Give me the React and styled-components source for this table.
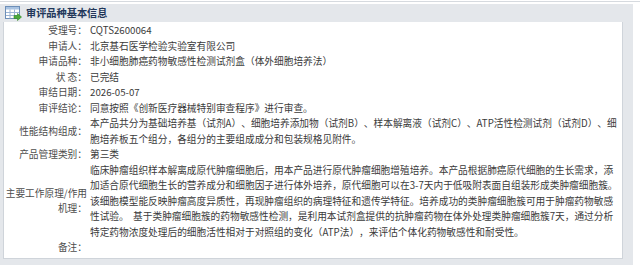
import React from 'react';
import styled, { createGlobalStyle } from 'styled-components';

const GlobalStyle = createGlobalStyle`
  html, body {
    margin: 0;
    padding: 0;
    background: #ffffff;
  }
  body {
    font-family: "Noto Sans CJK SC", "Noto Sans", sans-serif;
    font-size: 9.7px;
    color: #333;
    text-spacing-trim: space-all;
  }
`;

const rows = [
  { label: ['受理号：'], value: 'CQTS2600064' },
  { label: ['申请人：'], value: '北京基石医学检验实验室有限公司' },
  { label: ['申请品种：'], value: '非小细胞肺癌药物敏感性检测试剂盒（体外细胞培养法）' },
  { label: ['状 态：'], value: '已完结' },
  { label: ['审结日期：'], value: '2026-05-07' },
  { label: ['审评结论：'], value: '同意按照《创新医疗器械特别审查程序》进行审查。' },
  {
    label: ['性能结构组成：'],
    value:
      '本产品共分为基础培养基（试剂A）、细胞培养添加物（试剂B）、样本解离液（试剂C）、ATP活性检测试剂（试剂D）、细胞培养板五个组分，各组分的主要组成成分和包装规格见附件。',
  },
  { label: ['产品管理类别：'], value: '第三类' },
  {
    label: ['主要工作原理/作用', '机理：'],
    value:
      '临床肿瘤组织样本解离成原代肿瘤细胞后，用本产品进行原代肿瘤细胞增殖培养。本产品根据肺癌原代细胞的生长需求，添加适合原代细胞生长的营养成分和细胞因子进行体外培养，原代细胞可以在3-7天内于低吸附表面自组装形成类肿瘤细胞簇。该细胞模型能反映肿瘤高度异质性，再现肿瘤组织的病理特征和遗传学特征。培养成功的类肿瘤细胞簇可用于肿瘤药物敏感性试验。\u00a0 基于类肿瘤细胞簇的药物敏感性检测，是利用本试剂盒提供的抗肿瘤药物在体外处理类肿瘤细胞簇7天，通过分析特定药物浓度处理后的细胞活性相对于对照组的变化（ATP法），来评估个体化药物敏感性和耐受性。',
  },
  { label: ['备注：'], value: '' },
];

const Page = styled.div`
  width: 640px;
  height: 266px;
  padding-top: 1px;
  box-sizing: border-box;
  overflow: hidden;
`;

const TopRule = styled.div`
  height: 1px;
  background: #d6dadf;
  margin-bottom: 2px;
`;

const Panel = styled.section`
  width: 633px;
  box-sizing: border-box;
  background: #e4e7eb;
  padding: 0 10px 6px 3px;
`;

const Header = styled.div`
  height: 18px;
  display: flex;
  align-items: center;
  gap: 4px;
  padding-left: 2px;
`;

const Title = styled.h2`
  margin: 0;
  font-size: 10.2px;
  font-weight: bold;
  color: #22375a;
  line-height: 18px;
`;

const Content = styled.div`
  background: #ffffff;
  border: 1px solid #cfd4da;
  border-top: none;
  padding: 1px 0 2px 0;
  display: grid;
  grid-template-columns: 83px 1fr;
  column-gap: 3px;
  line-height: 15.5px;
`;

const Label = styled.div`
  display: flex;
  flex-direction: column;
  align-items: flex-end;
  justify-content: center;
  color: #4d4d4d;
  span {
    white-space: nowrap;
  }
`;

const Value = styled.div`
  color: #3a3a3a;
  min-height: 15.5px;
`;

const TableIcon = () => (
  <svg width="17" height="15" viewBox="0 0 17 15">
    <rect x="0.5" y="0.5" width="14" height="12" fill="#ffffff" stroke="#6d8fb8" />
    <rect x="1" y="1" width="13" height="2.5" fill="#a9c3e2" />
    <path d="M1 6.5H14M1 9.5H14M5 3.5V12.5M9.5 3.5V12.5" stroke="#9bb4d4" strokeWidth="1" />
    <path d="M9 9.5h3.5V7.5L16.5 11 12.5 14.5V12.5H9Z" fill="#4caa3c" stroke="#2f8a24" strokeWidth="0.6" />
  </svg>
);

export default function App() {
  return (
    <Page>
      <GlobalStyle />
      <TopRule />
      <Panel>
        <Header>
          <TableIcon />
          <Title>审评品种基本信息</Title>
        </Header>
        <Content>
          {rows.map((row, i) => (
            <React.Fragment key={i}>
              <Label>
                {row.label.map((l, j) => (
                  <span key={j}>{l}</span>
                ))}
              </Label>
              <Value>{row.value}</Value>
            </React.Fragment>
          ))}
        </Content>
      </Panel>
    </Page>
  );
}
